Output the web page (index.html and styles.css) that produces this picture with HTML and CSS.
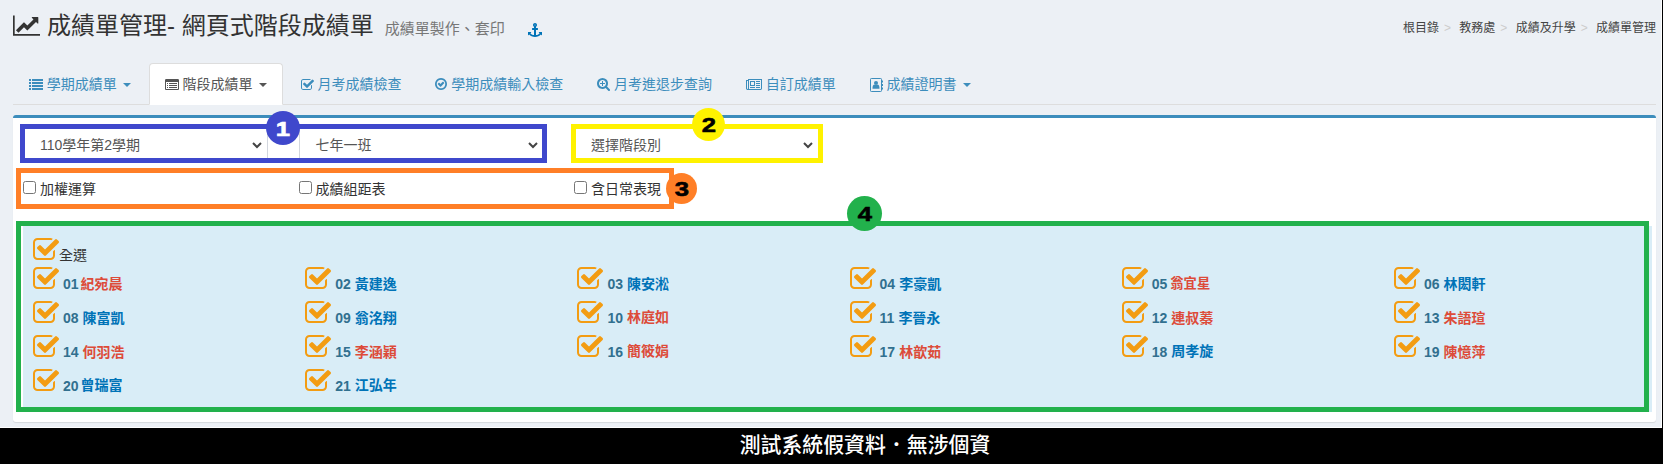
FILE: index.html
```html
<!DOCTYPE html>
<html lang="zh-Hant">
<head>
<meta charset="utf-8">
<title>成績單管理</title>
<link rel="stylesheet" href="styles.css">
</head>
<body>
<svg class="defs" width="0" height="0">
  <symbol id="check" viewBox="64 0 1664 1792"><path d="M1472 930v318q0 119-84.5 203.5t-203.5 84.5h-832q-119 0-203.5-84.5t-84.5-203.5v-832q0-119 84.5-203.5t203.5-84.5h832q63 0 117 25 15 7 18 23 3 17-9 29l-49 49q-10 10-23 10-3 0-9-2-23-6-45-6h-832q-66 0-113 47t-47 113v832q0 66 47 113t113 47h832q66 0 113-47t47-113v-254q0-13 9-22l64-64q10-10 23-10 6 0 12 3 20 8 20 29zm231-489l-814 814q-24 24-57 24t-57-24l-430-430q-24-24-24-57t24-57l110-110q24-24 57-24t57 24l263 263 647-647q24-24 57-24t57 24l110 110q24 24 24 57t-24 57z"/></symbol>
  <symbol id="chev" viewBox="0 0 10 7"><path d="M1 1l4 4 4-4" fill="none" stroke="#444" stroke-width="2"/></symbol>
</svg>
<main class="page">
  <header class="header">
    <h1 class="title">
      <svg class="chart" viewBox="0 128 2048 1536"><path d="M2048 1536v128h-2048v-1536h128v1408h1920zm-128-1248v435q0 21-19.5 29.5t-35.5-7.5l-121-121-633 633q-10 10-23 10t-23-10l-233-233-416 416-192-192 585-585q10-10 23-10t23 10l233 233 464-464-121-121q-16-16-7.5-35.5t29.5-19.5h435q14 0 23 9t9 23z"/></svg>
      <span>成績單管理- 網頁式階段成績單</span>
      <small class="sub">成績單製作、套印</small>
      <svg class="anchor" viewBox="0 0 1792 1792"><path d="M960 256q0-26-19-45t-45-19-45 19-19 45 19 45 45 19 45-19 19-45zm832 928v352q0 22-20 30-8 2-12 2-12 0-23-9l-93-93q-119 143-318.5 226.5t-429.5 83.5-429.5-83.5-318.5-226.5l-93 93q-9 9-23 9-4 0-12-2-20-8-20-30v-352q0-14 9-23t23-9h352q22 0 30 20 8 19-7 35l-100 100q67 91 189.5 153.5t271.5 82.5v-647h-192q-26 0-45-19t-19-45v-128q0-26 19-45t45-19h192v-163q-58-34-93-92.5t-35-128.5q0-106 75-181t181-75 181 75 75 181q0 70-35 128.5t-93 92.5v163h192q26 0 45 19t19 45v128q0 26-19 45t-45 19h-192v647q149-20 271.5-82.5t189.5-153.5l-100-100q-15-16-7-35 8-20 30-20h352q14 0 23 9t9 23z"/></svg>
    </h1>
    <ol class="crumbs"><li>根目錄</li><li>教務處</li><li>成績及升學</li><li>成績單管理</li></ol>
  </header>
  <nav class="tabs">
    <a class="tab"><svg class="w14" viewBox="0 0 1792 1792"><path d="M0 128h256v256H0zM384 128h1408v256H384zM0 512h256v256H0zM384 512h1408v256H384zM0 896h256v256H0zM384 896h1408v256H384zM0 1280h256v256H0zM384 1280h1408v256H384z"/></svg>學期成績單<i class="caret"></i></a>
    <a class="tab active"><svg class="w14" viewBox="0 0 1792 1792"><path d="M256 1152h128v128H256zM256 896h128v128H256zM256 640h128v128H256zM512 1152h1024v128H512zM512 896h1024v128H512zM512 640h1024v128H512zM1664 1376v-832q0-13-9.5-22.5t-22.5-9.5h-1472q-13 0-22.5 9.5t-9.5 22.5v832q0 13 9.5 22.5t22.5 9.5h1472q13 0 22.5-9.5t9.5-22.5zm128-1088v1088q0 66-47 113t-113 47h-1472q-66 0-113-47t-47-113v-1088q0-66 47-113t113-47h1472q66 0 113 47t47 113z"/></svg>階段成績單<i class="caret"></i></a>
    <a class="tab"><svg class="w13"><use href="#check"/></svg>月考成績檢查</a>
    <a class="tab"><svg class="w12" viewBox="128 128 1536 1792"><path d="M1299 813l-422 422q-19 19-45 19t-45-19l-294-294q-19-19-19-45t19-45l102-102q19-19 45-19t45 19l147 147 275-275q19-19 45-19t45 19l102 102q19 19 19 45t-19 45zm141 83q0-148-73-273t-198-198-273-73-273 73-198 198-73 273 73 273 198 198 273 73 273-73 198-198 73-273zm224 0q0 209-103 385.5t-279.5 279.5-385.5 103-385.5-103-279.5-279.5-103-385.5 103-385.5 279.5-279.5 385.5-103 385.5 103 279.5 279.5 103 385.5z"/></svg>學期成績輸入檢查</a>
    <a class="tab"><svg class="w13" viewBox="64 128 1664 1792"><path d="M1088 800v64q0 13-9.5 22.5t-22.5 9.5h-224v224q0 13-9.5 22.5t-22.5 9.5h-64q-13 0-22.5-9.5t-9.5-22.5v-224h-224q-13 0-22.5-9.5t-9.5-22.5v-64q0-13 9.5-22.5t22.5-9.5h224v-224q0-13 9.5-22.5t22.5-9.5h64q13 0 22.5 9.5t9.5 22.5v224h224q13 0 22.5 9.5t9.5 22.5zm128 32q0-185-131.5-316.5t-316.5-131.5-316.5 131.5-131.5 316.5 131.5 316.5 316.5 131.5 316.5-131.5 131.5-316.5zm512 832q0 53-37.5 90.5t-90.5 37.5q-54 0-90-38l-343-342q-179 124-399 124-143 0-273.5-55.5t-225-150-150-225-55.5-273.5 55.5-273.5 150-225 225-150 273.5-55.5 273.5 55.5 225 150 150 225 55.5 273.5q0 220-124 399l343 343q37 37 37 90z"/></svg>月考進退步查詢</a>
    <a class="tab"><svg class="w16" viewBox="0 0 2048 1792"><path d="M1024 512h-384v384h384v-384zm128 640v128h-640v-128h640zm0-768v640h-640v-640h640zm640 768v128h-512v-128h512zm0-256v128h-512v-128h512zm0-256v128h-512v-128h512zm0-256v128h-512v-128h512zm-1536 960v-960h-128v960q0 26 19 45t45 19 45-19 19-45zm1664 0v-1088h-1536v1088q0 33-11 64h1483q26 0 45-19t19-45zm128-1216v1216q0 80-56 136t-136 56h-1664q-80 0-136-56t-56-136v-1088h256v-128h1792z"/></svg>自訂成績單</a>
    <a class="tab"><svg class="w13" viewBox="0 0 13 14"><rect x=".5" y=".5" width="11" height="13" rx=".8" fill="none" stroke="currentColor"/><circle cx="6" cy="4.900" r="2"/><path d="M2.500 10.800c0-2.700.5-4.200 1.700-4.400 1.100.8 2.500.8 3.600 0 1.200.2 1.700 1.700 1.700 4.400zM12 2.500h1v2h-1zM12 6h1v2h-1zM12 9.500h1v2h-1z"/></svg>成績證明書<i class="caret"></i></a>
  </nav>
  <section class="box">
    <div class="row selects">
      <div class="select">110學年第2學期<svg class="chev"><use href="#chev"/></svg></div>
      <div class="select">七年一班<svg class="chev"><use href="#chev"/></svg></div>
      <div class="select">選擇階段別<svg class="chev"><use href="#chev"/></svg></div>
    </div>
    <div class="row options">
      <label class="opt"><input type="checkbox">加權運算</label>
      <label class="opt"><input type="checkbox">成績組距表</label>
      <label class="opt"><input type="checkbox">含日常表現</label>
    </div>
    <div class="students">
      <div class="all"><svg class="big"><use href="#check"/></svg><span>全選</span></div>
      <div class="grid">
        <div class="stu"><svg class="big"><use href="#check"/></svg><b>01</b><b class="f close">紀宛晨</b></div>
        <div class="stu"><svg class="big"><use href="#check"/></svg><b>02</b><b class="m">黃建逸</b></div>
        <div class="stu"><svg class="big"><use href="#check"/></svg><b>03</b><b class="m">陳安淞</b></div>
        <div class="stu"><svg class="big"><use href="#check"/></svg><b>04</b><b class="m">李豪凱</b></div>
        <div class="stu"><svg class="big"><use href="#check"/></svg><b>05</b><b class="f small">翁宜星</b></div>
        <div class="stu"><svg class="big"><use href="#check"/></svg><b>06</b><b class="m">林閎軒</b></div>
        <div class="stu"><svg class="big"><use href="#check"/></svg><b>08</b><b class="m">陳富凱</b></div>
        <div class="stu"><svg class="big"><use href="#check"/></svg><b>09</b><b class="m">翁洺翔</b></div>
        <div class="stu"><svg class="big"><use href="#check"/></svg><b>10</b><b class="f up">林庭如</b></div>
        <div class="stu"><svg class="big"><use href="#check"/></svg><b>11</b><b class="m">李晉永</b></div>
        <div class="stu"><svg class="big"><use href="#check"/></svg><b>12</b><b class="f">連叔蓁</b></div>
        <div class="stu"><svg class="big"><use href="#check"/></svg><b>13</b><b class="f">朱語瑄</b></div>
        <div class="stu"><svg class="big"><use href="#check"/></svg><b>14</b><b class="f">何羽浩</b></div>
        <div class="stu"><svg class="big"><use href="#check"/></svg><b>15</b><b class="f">李涵穎</b></div>
        <div class="stu"><svg class="big"><use href="#check"/></svg><b>16</b><b class="f up">簡筱娟</b></div>
        <div class="stu"><svg class="big"><use href="#check"/></svg><b>17</b><b class="f">林歆茹</b></div>
        <div class="stu"><svg class="big"><use href="#check"/></svg><b>18</b><b class="m up">周孝旋</b></div>
        <div class="stu"><svg class="big"><use href="#check"/></svg><b>19</b><b class="f">陳憶萍</b></div>
        <div class="stu"><svg class="big"><use href="#check"/></svg><b>20</b><b class="m close up">曾瑞富</b></div>
        <div class="stu"><svg class="big"><use href="#check"/></svg><b>21</b><b class="m up">江弘年</b></div>
      </div>
    </div>
  </section>
</main>
<footer class="notice">測試系統假資料．無涉個資</footer>

<div class="frame frame-1"></div>
<div class="frame frame-2"></div>
<div class="frame frame-3"></div>
<div class="frame frame-4"></div>
<div class="badge badge-1"><span>1</span></div>
<div class="badge badge-2"><span>2</span></div>
<div class="badge badge-3"><span>3</span></div>
<div class="badge badge-4"><span>4</span></div>
</body>
</html>
```
FILE: styles.css
```css
* { box-sizing: border-box; }
body {
  margin: 0;
  width: 1663px;
  height: 464px;
  position: relative;
  overflow: hidden;
  background: #000;
  color: #333;
  font: 14px/20px "Liberation Sans", "Noto Sans CJK TC", sans-serif;
}
svg { flex: none; fill: currentColor; }
.defs { position: absolute; }
.page {
  width: 1662px;
  height: 428px;
  padding: 0 5px 0 13px;
  background: #ecf0f5;
  border-right: 1px solid #fff;
  border-bottom: 1px solid #fff;
}

/* Page heading */
.header { display: flex; justify-content: space-between; height: 63px; }
.title {
  display: flex;
  margin: 0;
  font-size: 24px;
  font-weight: 400;
  line-height: 52px;
  white-space: nowrap;
}
.chart { width: 27px; height: 21px; margin: 15px 7px 0 0; }
.sub { margin-left: 11px; font-size: 15px; line-height: 58px; color: #777; }
.anchor { width: 14px; height: 14px; margin: 23px 0 0 23px; color: #0073b7; }
.crumbs {
  display: flex;
  margin: 0;
  padding: 0;
  list-style: none;
  font-size: 12px;
  line-height: 57px;
  color: #444;
}
.crumbs li + li::before { content: ">"; padding: 0 8.300px 0 5px; color: #ccc; }

/* Tabs */
.tabs { display: flex; gap: 2px; height: 42px; border-bottom: 1px solid #ddd; }
.tab {
  display: flex;
  height: 42px;
  padding: 0 15px;
  border: 1px solid transparent;
  line-height: 40px;
  color: #3c8dbc;
  white-space: nowrap;
}
.tab svg { height: 14px; margin: 14px 3.800px 0 0; }
.tab.active {
  color: #555;
  background: #fff;
  border-color: #ddd #ddd #fff;
  border-radius: 4px 4px 0 0;
}
.w12 { width: 12px; }
.w13 { width: 13px; }
.w14 { width: 14px; }
.w16 { width: 16px; }
.caret {
  width: 8px;
  height: 4px;
  margin: 19px 0 0 6px;
  border-top: 4px solid currentColor;
  border-left: 4px solid transparent;
  border-right: 4px solid transparent;
}

/* Panel */
.box {
  height: 307px;
  margin-top: 10px;
  padding: 9px 10px 0;
  border-top: 3px solid #3c8dbc;
  border-radius: 3px;
  background: #fff;
  box-shadow: 0 1px 1px rgba(0, 0, 0, .1);
}
.row { display: grid; grid-template-columns: repeat(3, 245px); column-gap: 30.5px; }
.select {
  display: flex;
  align-items: center;
  justify-content: space-between;
  height: 34px;
  padding: 2px 5px 0 16px;
  border: 1px solid #d2d6de;
  color: #555;
}
.chev { width: 10px; height: 7px; }
.options { height: 65px; padding-top: 18px; }
.opt { display: flex; height: 20px; }
.opt input { width: 13px; height: 13px; margin: 2px 4px 0 0; }

/* Student list */
.students {
  height: 186px;
  margin-right: -6px;
  padding: 8px 10px;
  background: #d9edf7;
}
.big { width: 26px; height: 28px; color: #f39c12; }
.all { display: flex; height: 29px; padding-top: 2px; }
.all span { padding-top: 9px; }
.grid { display: grid; grid-template-columns: repeat(6, 272.2px); grid-auto-rows: 34px; }
.stu { display: flex; padding-top: 2px; color: #31708f; }
.stu b { line-height: 38px; }
.stu svg + b { margin-left: 4px; }
.stu .m, .stu .f { margin-left: 4px; }
.stu .m { color: #0073b7; }
.stu .f { color: #dd4b39; }
.stu .close { margin-left: 2px; }
.stu .small { margin-left: 3px; font-size: 13.3px; line-height: 37px; }
.stu .up { line-height: 36px; }

.notice {
  height: 36px;
  padding-left: 67px;
  font: 500 20.9px/30px "Noto Sans CJK TC", sans-serif;
  text-align: center;
  color: #fff;
}

/* Numbered callouts laid over the page */
.frame { position: absolute; border: 5px solid; }
.frame-1 { left: 20px; top: 124px; width: 527px; height: 39px; color: #3f48cc; }
.frame-2 { left: 571px; top: 124px; width: 252px; height: 39px; color: #fff200; }
.frame-3 { left: 16px; top: 168px; width: 658px; height: 41px; color: #ff7f27; }
.frame-4 { left: 16px; top: 221px; width: 1633px; height: 191px; color: #22b14c; }
.badge {
  position: absolute;
  display: flex;
  align-items: center;
  justify-content: center;
  border-radius: 50%;
  color: #000;
  font: 700 21px/1 "Liberation Sans", sans-serif;
}
.badge span { transform: scaleX(1.22); -webkit-text-stroke: .6px currentColor; }
.badge-1 { left: 266px; top: 111px; width: 34px; height: 34px; background: #3f48cc; color: #fff; }
.badge-2 { left: 692px; top: 108px; width: 33px; height: 33px; background: #fff200; }
.badge-3 { left: 666px; top: 173px; width: 31px; height: 31px; background: #ff7f27; }
.badge-4 { left: 847px; top: 196px; width: 35px; height: 35px; background: #22b14c; }
```
